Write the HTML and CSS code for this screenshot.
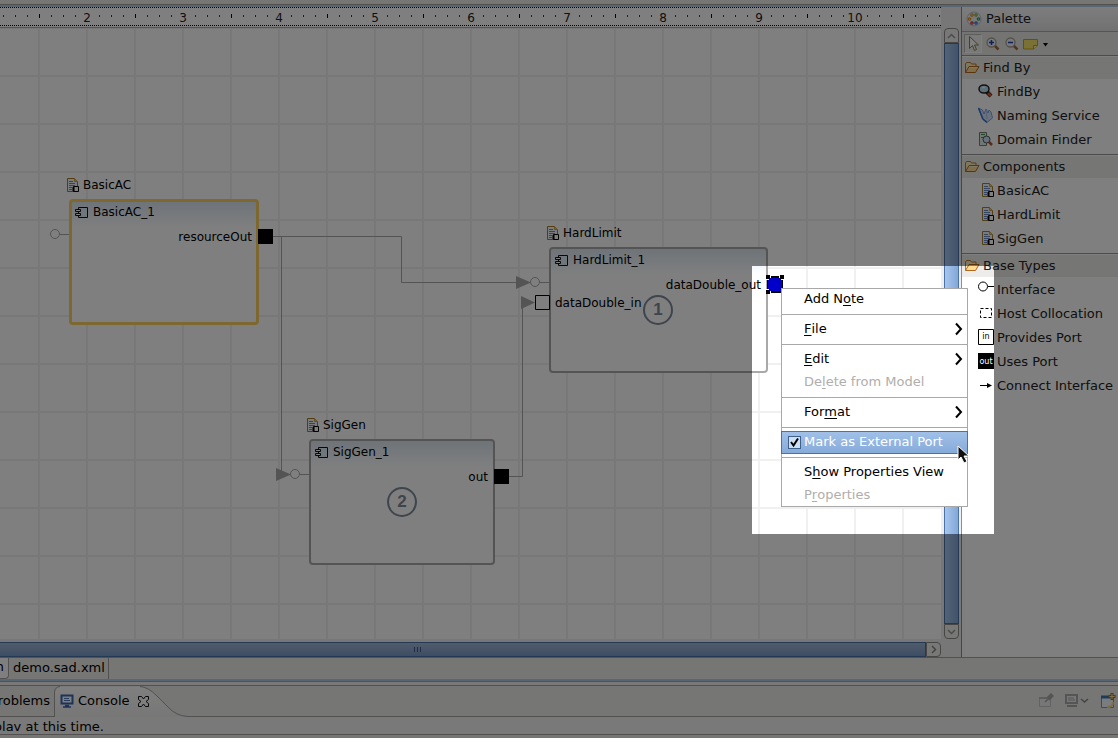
FILE: index.html
```html
<!DOCTYPE html>
<html lang="en">
<head>
<meta charset="utf-8">
<title>demo.sad.xml</title>
<link rel="stylesheet" href="styles.css">
</head>
<body>
<svg class="defs" width="0" height="0" aria-hidden="true">
  <defs>
    <symbol id="folder" viewBox="0 0 16 14">
      <path d="M1.500 11.500V3l1-1.500h4l1 1.500h4.500v2.500" fill="#fff0c0" stroke="#b5792c"/>
      <path d="M1.500 11.500L5 5.500h10L11.500 11.500z" fill="#ffdc92" stroke="#b06a1c"/>
      <path d="M5.500 6.500h8" stroke="#fff3cf"/>
    </symbol>
    <symbol id="doc" viewBox="0 0 13 16">
      <path d="M.5 1.500h7l3 3v10h-10z" fill="#f4f6fb" stroke="#a07c28"/>
      <path d="M7.500 1.500v3h3" fill="#f1d27c" stroke="#c8a04a"/>
      <path d="M2 4.500h4M2 6.500h6M2 8.500h6M2 10.500h3M2 12.500h3" stroke="#6888c4"/>
      <path d="M6.500 9.500h5v5h-5z" fill="#fff" stroke="#000"/>
      <path d="M5 11h3M5 13h3" stroke="#000"/>
    </symbol>
    <symbol id="part" viewBox="0 0 14 12">
      <path d="M3.500 .5h9v10h-9z" fill="#dfeefa" stroke="#111"/>
      <path d="M.5 2.500h5v2h-5zM.5 6.500h5v2h-5z" fill="#fff" stroke="#111"/>
    </symbol>
    <symbol id="lens" viewBox="0 0 14 14">
      <path d="M8.500 8.500l4 4" stroke="#a8673a" stroke-width="2.500"/>
      <circle cx="5.500" cy="5.500" r="4.500" fill="#eef3ff" stroke="#a9a391" stroke-width="1.300"/>
    </symbol>
    <symbol id="more" viewBox="0 0 8 14"><path d="M1 1.500L6 7l-5 5.500" fill="none" stroke="#000" stroke-width="2"/></symbol>
    <linearGradient id="tabfill" x2="0" y2="1"><stop stop-color="#fff"/><stop offset="1" stop-color="#efeeed"/></linearGradient>
    <pattern id="ticks" x="39" width="96" height="18" patternUnits="userSpaceOnUse">
      <path d="M.5 6v4" stroke="#000"/>
      <path d="M12.500 7v2M24.500 7v2M36.500 7v2M60.500 7v2M72.500 7v2M84.500 7v2" stroke="#444"/>
    </pattern>
  </defs>
</svg>

<div class="topstrip"></div>
<main class="workspace">
  <section class="editor">
    <div class="ruler">
      <svg class="ticks"><rect width="100%" height="18" fill="url(#ticks)"/></svg>
      <div class="numbers"><span>2</span><span>3</span><span>4</span><span>5</span><span>6</span><span>7</span><span>8</span><span>9</span><span>10</span></div>
    </div>
    <div class="canvas">
      <svg class="wires">
        <g fill="none" stroke="#a8a8a8">
          <path d="M60 206.500h9M273 208.500h128.500v46H517M281.500 208.500V446M540 254.500h9M300 446.500h9M509 448.500h13.500V275"/>
          <circle cx="55" cy="206" r="4.500"/><circle cx="535" cy="254" r="4.500"/><circle cx="295" cy="446" r="4.500"/>
        </g>
        <path d="M516 248l15 6.500-15 6.500zM521 268l14 6.500-14 6.500zM276 440l15 6.500-15 6.500z" fill="#a8a8a8"/>
      </svg>
      <article class="node basic">
        <div class="tag"><svg width="13" height="16"><use href="#doc"/></svg>BasicAC</div>
        <div class="title"><svg width="14" height="12"><use href="#part"/></svg>BasicAC_1</div>
        <div class="out">resourceOut</div>
      </article>
      <article class="node hard">
        <div class="tag"><svg width="13" height="16"><use href="#doc"/></svg>HardLimit</div>
        <div class="title"><svg width="14" height="12"><use href="#part"/></svg>HardLimit_1</div>
        <div class="out">dataDouble_out</div>
        <div class="in">dataDouble_in</div>
        <div class="badge">1</div>
      </article>
      <article class="node sig">
        <div class="tag"><svg width="13" height="16"><use href="#doc"/></svg>SigGen</div>
        <div class="title"><svg width="14" height="12"><use href="#part"/></svg>SigGen_1</div>
        <div class="out">out</div>
        <div class="badge">2</div>
      </article>
      <svg class="wires">
        <path d="M258 201h15v15h-15zM494 441h15v15h-15z"/>
        <path d="M535.500 267.500h14v14h-14z" fill="#fff" stroke="#000"/>
        <path d="M767 248h16v17h-16z"/>
        <path d="M768 250h14v13h-14z" fill="#0000c8"/>
        <path d="M766 247h5v5h-5zM779 247h5v5h-5zM766 261h5v5h-5z" fill="#fff"/>
        <path d="M769 250h2v2h-2zM779 250h2v2h-2zM769 261h2v2h-2z" fill="#0000c8"/>
        <path d="M766 247h4v4h-4zM780 247h4v4h-4zM766 262h4v4h-4z"/>
      </svg>
    </div>
    <div class="vscroll">
      <button class="arrow up" aria-label="Scroll up"><svg width="9" height="6"><path d="M1 5l3.500-3.500L8 5" fill="none" stroke="#999" stroke-width="1.500"/></svg></button>
      <div class="thumb"></div>
      <button class="arrow down" aria-label="Scroll down"><svg width="9" height="6"><path d="M1 1l3.500 3.500L8 1" fill="none" stroke="#999" stroke-width="1.500"/></svg></button>
    </div>
    <div class="hscroll">
      <div class="thumb"><i></i><i></i><i></i></div>
      <button class="arrow right" aria-label="Scroll right"><svg width="6" height="9"><path d="M1 1l3.500 3.500L1 8" fill="none" stroke="#888" stroke-width="1.500"/></svg></button>
    </div>
  </section>

  <aside class="palette">
    <header class="palhead">
      <svg width="16" height="16" viewBox="0 0 16 16"><circle cx="8" cy="8" r="7" fill="#eef3fb" stroke="#b4c4dc"/><g fill="#fff" stroke-width="1.200"><circle cx="6" cy="4" r="1.200" stroke="#e09818"/><circle cx="10" cy="4" r="1.200" stroke="#80b030"/><circle cx="3.500" cy="8" r="1.200" stroke="#f08a10"/><circle cx="12.500" cy="8" r="1.200" stroke="#409850"/><circle cx="6" cy="12" r="1.200" stroke="#d03030"/><circle cx="10" cy="12" r="1.200" stroke="#3868d0"/></g></svg>
      Palette
    </header>
    <div class="paltools">
      <button class="pick" aria-label="Select"><svg width="16" height="17"><path d="M4.500 1.500v12l3-3 2 5 2-1-2-4.500h4z" fill="#fff" stroke="#8b8253"/></svg></button>
      <button aria-label="Zoom in"><svg width="14" height="14"><use href="#lens"/><path d="M3 5.500h5M5.500 3v5" stroke="#2040b0" stroke-width="1.500"/></svg></button>
      <button aria-label="Zoom out"><svg width="14" height="14"><use href="#lens"/><path d="M3 5.500h5" stroke="#2040b0" stroke-width="1.500"/></svg></button>
      <button class="note" aria-label="Note"><svg width="26" height="12"><path d="M.5 1.500h14v6l-4 3.500h-10z" fill="#f7e36a" stroke="#c0a030"/><path d="M10.500 11V7.500h4" fill="#fff5b0" stroke="#c0a030"/><path d="M20 5h5l-2.500 3.500z"/></svg></button>
    </div>
    <section class="drawer">
      <h2><svg width="16" height="14"><use href="#folder"/></svg>Find By</h2>
      <ul>
        <li><svg width="16" height="16"><path d="M9 9l4 4" stroke="#111" stroke-width="4"/><path d="M10 10l3 3" stroke="#d8542a" stroke-width="3"/><ellipse cx="6" cy="6" rx="5" ry="4" fill="#b9dcf4" stroke="#222" stroke-width="1.500"/><path d="M4 4.500h3" stroke="#fff" stroke-width="1.500"/></svg><span>FindBy</span></li>
        <li><svg width="16" height="16"><path d="M.5 1l4 2 1.500 4 2-5 2 4 1-3 2 2 1.500 6-5 4-5-3z" fill="#d5e2f8" stroke="#7fa2e0"/><path d="M.5 1l4.500 11 4 3.500" stroke="#3c70cc" stroke-width="1.500" fill="none"/><path d="M8 3l1 9" stroke="#a9c0ea" fill="none"/></svg><span>Naming Service</span></li>
        <li><svg width="16" height="16"><path d="M1.500 1.500h7v13h-7z" fill="#e7efe7" stroke="#70806f"/><path d="M3 3.500h4M3 6.500h4" stroke="#3f9a51"/><path d="M10 10l4 4" stroke="#c05228" stroke-width="2.500"/><circle cx="8.500" cy="8.500" r="3.500" fill="#cde4f5" stroke="#555"/></svg><span>Domain Finder</span></li>
      </ul>
    </section>
    <section class="drawer">
      <h2><svg width="16" height="14"><use href="#folder"/></svg>Components</h2>
      <ul>
        <li><svg width="16" height="16"><use href="#doc" x="4" width="13" height="16"/></svg><span>BasicAC</span></li>
        <li><svg width="16" height="16"><use href="#doc" x="4" width="13" height="16"/></svg><span>HardLimit</span></li>
        <li><svg width="16" height="16"><use href="#doc" x="4" width="13" height="16"/></svg><span>SigGen</span></li>
      </ul>
    </section>
    <section class="drawer">
      <h2><svg width="16" height="14"><use href="#folder"/></svg>Base Types</h2>
      <ul>
        <li><svg width="16" height="16"><path d="M10 5.500h6" stroke="#000"/><circle cx="5" cy="5.500" r="4.500" fill="#fff" stroke="#000"/></svg><span>Interface</span></li>
        <li><svg width="16" height="16"><path d="M2.500 3.500h11v9h-11z" fill="none" stroke="#000" stroke-dasharray="3 2"/></svg><span>Host Collocation</span></li>
        <li><svg width="16" height="16"><path d="M.5 .5h15v15h-15z" fill="#fff" stroke="#000"/><text class="tiny" x="8" y="10">in</text></svg><span>Provides Port</span></li>
        <li><svg width="16" height="16"><path d="M0 0h16v16H0z"/><text class="tiny light" x="8" y="11">out</text></svg><span>Uses Port</span></li>
        <li><svg width="16" height="16"><path d="M2 8.500h9" stroke="#000"/><path d="M9 6l5 2.500-5 2.500z"/></svg><span>Connect Interface</span></li>
      </ul>
    </section>
  </aside>
</main>

<nav class="pages">
  <button class="page current">Diagram</button>
  <button class="page source">demo.sad.xml</button>
</nav>
<div class="sash"></div>
<section class="console">
  <div class="views">
    <button class="view problems">Problems</button>
    <button class="view active">
      <svg class="shape" width="134" height="31"><path d="M.5 31V6Q1 1 6 .5H86Q94 1 103 10l11 11q8 9 20 9.500V31z" fill="url(#tabfill)"/><path d="M.5 31V6Q1 1 6 .5M86 .5Q94 1 103 10l11 11q8 9 20 9.500" fill="none" stroke="#a5a3a1"/></svg>
      <svg width="14" height="14"><path d="M1.500 1.500h11v8h-11z" fill="#fff" stroke="#3a66b0" stroke-width="2"/><path d="M4 4.500h5M4 6.500h6" stroke="#5377b5"/><path d="M5 11.500h4M3 13h8" stroke="#3a66b0" stroke-width="1.500"/></svg>
      <span>Console</span>
      <svg width="11" height="11"><path d="M.5 .5h3l2 2.500 2-2.500h3v3L8 5.500l2.500 2v3h-3l-2-2.500-2 2.500h-3v-3L3 5.500l-2.500-2z" fill="#fff" stroke="#111"/></svg>
    </button>
    <div class="actions">
      <svg width="16" height="16"><path d="M1.500 4.500h11v9h-11z" fill="#eee" stroke="#c5c5c5"/><path d="M1 5h8" stroke="#bbb" stroke-width="2"/><path d="M7 9l3-3M9 4l3 3M10 4l3-3 2 2-3 3z" stroke="#aaa" stroke-width="1.500" fill="#aaa"/></svg>
      <svg width="26" height="16"><path d="M2 2h11v8H2z" fill="#eee" stroke="#aaa" stroke-width="2"/><path d="M4 5h6M4 7h7" stroke="#aaa"/><path d="M3 13h10" stroke="#aaa" stroke-width="2"/><path d="M17 6l3.500 3L24 6" fill="none" stroke="#888" stroke-width="1.500"/></svg>
      <svg width="16" height="16"><path d="M1.500 3.500h12v11h-12z" fill="#f5faff" stroke="#a4935a"/><path d="M1 4h9" stroke="#3c76bc" stroke-width="3"/><path d="M13 9q0 5-6 5" stroke="#ffdc80" stroke-width="2" fill="none"/><path d="M12 0v7M8.500 3.500h7" stroke="#9b771c" stroke-width="3"/><path d="M12 1v5M9.500 3.500h5" stroke="#ffe69a"/></svg>
    </div>
  </div>
  <div class="message"><p>No consoles to display at this time.</p></div>
</section>

<div class="spotlight"></div>
<div class="menu" role="menu">
  <button role="menuitem">Add N<u>o</u>te</button>
  <hr>
  <button role="menuitem"><u>F</u>ile<svg width="8" height="14"><use href="#more"/></svg></button>
  <hr>
  <button role="menuitem"><u>E</u>dit<svg width="8" height="14"><use href="#more"/></svg></button>
  <button role="menuitem" disabled>De<u>l</u>ete from Model</button>
  <hr>
  <button role="menuitem">For<u>m</u>at<svg width="8" height="14"><use href="#more"/></svg></button>
  <hr>
  <label class="chosen"><input type="checkbox" checked><span>Mark as External Port</span></label>
  <hr>
  <button role="menuitem">S<u>h</u>ow Properties View</button>
  <button role="menuitem" disabled>P<u>r</u>operties</button>
  <svg class="pointer" width="14" height="20"><path d="M1 1v14l3-3 3 6 3-1.500-3-5.500h5z" fill="#111" stroke="#fff"/></svg>
</div>
</body>
</html>
```

FILE: styles.css
```css
* { box-sizing: border-box; }
html, body { height: 100%; }
body {
  margin: 0;
  display: flex;
  flex-direction: column;
  overflow: hidden;
  position: relative;
  background: #edeceb;
  color: #000;
  font: 13px/16px "DejaVu Sans", sans-serif;
}
svg { display: block; flex: none; }
button { font: inherit; color: inherit; background: none; border: 0; padding: 0; margin: 0; }
h2, ul, p { margin: 0; padding: 0; font: inherit; }
.defs { position: absolute; }

.topstrip {
  height: 7px;
  flex: none;
  background: linear-gradient(#edeceb 4px, #a5a3a1 4px, #a5a3a1 5px, #b4cae4 5px);
}
.workspace { flex: 1; min-height: 0; display: flex; }

/* Editor */
.editor {
  flex: 1;
  min-width: 0;
  display: grid;
  grid-template-columns: minmax(0, 1fr) 15px;
  grid-template-rows: 21px minmax(0, 1fr) 15px;
  column-gap: 3px;
  padding-right: 2px;
  background: #f0efee;
}
.ruler {
  display: grid;
  height: 21px;
  overflow: hidden;
  background: #fff;
  border-top: 1px dotted #000;
  border-bottom: 1px solid #aaa;
}
.ticks { grid-area: 1 / 1; width: 100%; height: 18px; border-bottom: 1px dotted #000; }
.numbers { grid-area: 1 / 1; display: flex; padding-left: 39px; font-size: 12px; line-height: 20px; color: #222; }
.numbers span { flex: none; width: 96px; text-align: center; }
.canvas {
  grid-area: 2 / 1;
  position: relative;
  overflow: hidden;
  margin-bottom: 3px;
  background-color: #fff;
  background-image: linear-gradient(90deg, #f0f0f0 2px, transparent 2px), linear-gradient(#f0f0f0 2px, transparent 2px);
  background-size: 48px 48px;
  background-position: 38px 47px;
  font-size: 12px;
}
.wires { position: absolute; inset: 0; width: 100%; height: 100%; }
.node {
  position: absolute;
  height: 126px;
  border: 2px solid #a9a9a9;
  border-radius: 4px;
  background: linear-gradient(#dde8f3, #fff 26px);
}
.basic { left: 69px; top: 171px; width: 190px; border: 3px solid #f9d160; }
.hard { left: 549px; top: 219px; width: 219px; }
.sig { left: 309px; top: 411px; width: 186px; }
.tag { position: absolute; left: -4px; top: -24px; display: flex; align-items: center; gap: 3px; white-space: nowrap; }
.basic .tag { left: -5px; top: -25px; }
.title { display: flex; align-items: center; gap: 4px; padding: 3px 0 0 4px; line-height: 17px; }
.basic .title { padding: 2px 0 0 3px; }
.out { text-align: right; padding: 8px 5px 0 0; line-height: 17px; }
.basic .out { padding-right: 4px; }
.in { padding-left: 4px; line-height: 17px; margin-top: 1px; }
.badge {
  position: absolute;
  left: 92px;
  top: 46px;
  width: 30px;
  height: 30px;
  border: 2px solid #7c8a98;
  border-radius: 50%;
  color: #7c8a98;
  font: bold 17px/26px "Liberation Sans", sans-serif;
  text-align: center;
}
.sig .badge { left: 76px; }

.arrow { display: flex; align-items: center; justify-content: center; background: #f1f0ef; border: 1px solid #8f8d8b; flex: none; width: 15px; height: 15px; }
.up { border-radius: 4px 4px 0 0; }
.down { border-radius: 0 0 4px 4px; }
.right { border-radius: 0 4px 4px 0; }
.thumb { flex: 1; border: 1px solid #4a72a8; display: flex; align-items: center; justify-content: center; gap: 2px; }
.thumb i { width: 1px; height: 5px; background: #3c5b8a; }
.vscroll { grid-area: 2 / 2; display: flex; flex-direction: column; margin-bottom: 3px; }
.vscroll .thumb { background: linear-gradient(90deg, #a8c6ec, #82a7d8); }
.hscroll { grid-area: 3 / 1; display: flex; }
.hscroll .thumb { border-left: 0; padding-right: 90px; background: linear-gradient(#a0b9d6, #7a9bc9); }

/* Palette */
.palette { flex: none; width: 157px; border-left: 1px solid #8f8d8b; background: #fff; white-space: nowrap; color: #222; }
.palhead { display: flex; align-items: center; gap: 4px; height: 25px; padding-left: 4px; border-bottom: 1px solid #aaa; background: linear-gradient(#fbfbfb, #e4e3e2); }
.paltools { display: flex; align-items: center; height: 23px; background: #e9e8e7; padding-left: 2px; gap: 5px; }
.pick { border: 1px solid #bbb; border-right-color: #fff; border-bottom-color: #fff; background: #f3f2f1; width: 18px; height: 19px; margin-right: -1px; }
.note { margin-left: -1px; }
.drawer { border-top: 1px solid #999; padding: 1px 0 3px; }
.drawer h2 { display: flex; align-items: center; gap: 3px; height: 22px; padding-left: 2px; padding-bottom: 1px; background: #edeceb; }
.drawer ul { list-style: none; }
.drawer li { display: flex; align-items: center; gap: 3px; height: 24px; padding-left: 16px; }
.drawer li span { padding-top: 2px; }
.tiny { font: 8px "DejaVu Sans", sans-serif; text-anchor: middle; }
.light { fill: #fff; }

/* Editor page tabs */
.pages { flex: none; display: flex; height: 22px; border-top: 1px solid #a5a3a1; }
.page { border-right: 1px solid #a5a3a1; height: 21px; padding-bottom: 2px; white-space: nowrap; }
.current { display: flex; justify-content: flex-end; align-items: center; width: 9px; padding-right: 4px; background: #fff; border-bottom: 1px solid #a5a3a1; border-radius: 0 0 4px 0; overflow: hidden; }
.source { padding-left: 4px; padding-right: 3px; }
.sash { flex: none; height: 6px; background: linear-gradient(#b4cae4 2px, #a5a3a1 2px, #a5a3a1 3px, #f4f3f2 3px); }

/* Console */
.console { flex: none; height: 53px; }
.views { display: flex; align-items: center; height: 32px; border-top: 1px solid #a5a3a1; border-bottom: 1px solid #a5a3a1; }
.problems { display: flex; justify-content: flex-end; width: 54px; padding-right: 4px; overflow: hidden; }
.active { position: relative; display: flex; align-items: center; gap: 4px; height: 31px; padding-left: 6px; }
.active .shape { position: absolute; left: 0; top: 0; }
.active svg:not(.shape), .active span { position: relative; }
.active span { margin-right: 4px; }
.actions { margin-left: auto; display: flex; gap: 10px; padding-right: 2px; }
.message { height: 18px; border-bottom: 1px solid #a5a3a1; background: #f3f2f2; }
.message p { display: flex; justify-content: flex-end; width: 104px; height: 14px; line-height: 20px; overflow: hidden; white-space: nowrap; }

/* Highlighted region and popup menu */
.spotlight { position: absolute; left: 752px; top: 266px; width: 242px; height: 268px; box-shadow: 0 0 0 2000px rgba(0, 0, 0, 0.5); pointer-events: none; }
.menu { position: absolute; left: 781px; top: 288px; width: 187px; display: flex; flex-direction: column; background: #fff; box-shadow: inset 0 0 0 1px #a8a8a8; }
.menu button, .menu label { display: flex; align-items: center; height: 23px; padding: 0 5px 2px 23px; white-space: nowrap; }
.menu button svg { margin-left: auto; }
.menu u { text-decoration-thickness: 1px; text-underline-offset: 2px; }
.menu button:disabled { color: #b0aeac; }
.menu hr { width: 100%; height: 7px; margin: 0; border: 0; background: linear-gradient(#a8a8a8, #a8a8a8) 0 3px / 100% 1px no-repeat; }
.menu .chosen { padding: 0 5px 0 6px; gap: 3px; color: #fff; background: linear-gradient(#a0c0e8, #86abd9); border: 1px solid #4a72a8; }
.chosen span { padding-bottom: 2px; }
.chosen input {
  appearance: none;
  width: 13px;
  height: 13px;
  margin: 0;
  border: 1px solid #3f5f8c;
  background: #cfdff3 url("data:image/svg+xml,%3Csvg xmlns='http://www.w3.org/2000/svg' width='11' height='11'%3E%3Cpath d='M2 5l2.500 3.500L9 1.500' fill='none' stroke='%23000' stroke-width='2'/%3E%3C/svg%3E") center no-repeat;
}
.pointer { position: absolute; left: 176px; top: 157px; }
```
